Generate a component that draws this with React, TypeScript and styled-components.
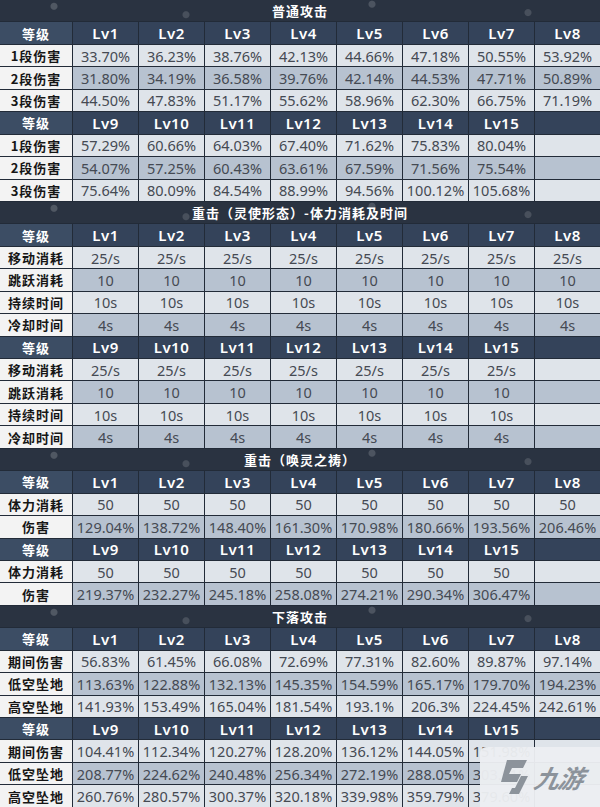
import * as React from "react";
import styled, { createGlobalStyle } from "styled-components";

const GlobalStyle = createGlobalStyle`
  html, body {
    margin: 0;
    padding: 0;
    background: #1f2734;
  }
  * {
    box-sizing: border-box;
  }
`;

const FONT = `"Noto Sans", "Noto Sans CJK SC", sans-serif`;

const Page = styled.div`
  position: relative;
  width: 600px;
  height: 807px;
  display: flex;
  flex-direction: column;
  gap: 1px;
  background: #222b38;
  overflow: hidden;
  font-family: ${FONT};
`;

const TitleRow = styled.div`
  flex: 1;
  display: flex;
  align-items: center;
  justify-content: center;
  background-color: #2a3341;
  background-image: radial-gradient(circle at 9% 30%, rgba(255, 255, 255, 0.18) 0 3px, transparent 4px),
    radial-gradient(circle at 31% 70%, rgba(255, 255, 255, 0.14) 0 3px, transparent 4px),
    radial-gradient(circle at 62% 20%, rgba(255, 255, 255, 0.16) 0 3px, transparent 4px),
    radial-gradient(circle at 88% 60%, rgba(255, 255, 255, 0.14) 0 3px, transparent 4px);
  color: #ffffff;
  font-family: "Noto Sans CJK SC", sans-serif;
  font-weight: 700;
  font-size: 13px;
  letter-spacing: 1px;
`;

const Row = styled.div`
  flex: 1;
  display: grid;
  grid-template-columns: 72px repeat(8, 1fr);
  gap: 1px;
`;

const HeadCell = styled.div<{ $label?: boolean }>`
  display: flex;
  align-items: center;
  justify-content: center;
  background: ${(p) => (p.$label ? "#3c4d64" : "#34435a")};
  color: #ffffff;
  font-family: ${(p) => (p.$label ? `"Noto Sans CJK SC", sans-serif` : FONT)};
  font-weight: ${(p) => (p.$label ? 700 : 600)};
  font-size: ${(p) => (p.$label ? "13px" : "15px")};
  letter-spacing: ${(p) => (p.$label ? "1px" : "0.5px")};
`;

const LabelCell = styled.div`
  display: flex;
  align-items: center;
  justify-content: center;
  background: #f3f3f3;
  color: #161616;
  font-family: "Noto Sans CJK SC", sans-serif;
  font-weight: 700;
  font-size: 13px;
  letter-spacing: 1px;
`;

const DataCell = styled.div<{ $dark?: boolean }>`
  display: flex;
  align-items: center;
  justify-content: center;
  background: ${(p) => (p.$dark ? "#b7c2d0" : "#dfe4ea")};
  color: #454a53;
  font-size: 14.5px;
  font-weight: 400;
  white-space: nowrap;
`;

const Logo = styled.div`
  position: absolute;
  right: 0;
  bottom: 0;
  width: 120px;
  height: 60px;
  display: flex;
  align-items: center;
  justify-content: center;
  gap: 4px;
  background: rgba(236, 238, 241, 0.96);
  border-top-left-radius: 6px;
`;

const LogoText = styled.span`
  font-family: "Noto Sans CJK SC", sans-serif;
  font-weight: 700;
  font-style: italic;
  font-size: 25px;
  color: #8c939b;
  transform: skewX(-12deg);
  letter-spacing: -1px;
`;

type Block = { levels: string[]; rows: { label: string; values: string[] }[] };
type Section = { title: string; blocks: Block[] };

const lv = (a: number, b: number) => Array.from({ length: b - a + 1 }, (_, i) => `Lv${a + i}`);
const rep = (v: string, n: number) => Array.from({ length: n }, () => v);

const sections: Section[] = [
  {
    title: "普通攻击",
    blocks: [
      {
        levels: lv(1, 8),
        rows: [
          { label: "1段伤害", values: ["33.70%", "36.23%", "38.76%", "42.13%", "44.66%", "47.18%", "50.55%", "53.92%"] },
          { label: "2段伤害", values: ["31.80%", "34.19%", "36.58%", "39.76%", "42.14%", "44.53%", "47.71%", "50.89%"] },
          { label: "3段伤害", values: ["44.50%", "47.83%", "51.17%", "55.62%", "58.96%", "62.30%", "66.75%", "71.19%"] },
        ],
      },
      {
        levels: lv(9, 15),
        rows: [
          { label: "1段伤害", values: ["57.29%", "60.66%", "64.03%", "67.40%", "71.62%", "75.83%", "80.04%"] },
          { label: "2段伤害", values: ["54.07%", "57.25%", "60.43%", "63.61%", "67.59%", "71.56%", "75.54%"] },
          { label: "3段伤害", values: ["75.64%", "80.09%", "84.54%", "88.99%", "94.56%", "100.12%", "105.68%"] },
        ],
      },
    ],
  },
  {
    title: "重击（灵使形态）-体力消耗及时间",
    blocks: [
      {
        levels: lv(1, 8),
        rows: [
          { label: "移动消耗", values: rep("25/s", 8) },
          { label: "跳跃消耗", values: rep("10", 8) },
          { label: "持续时间", values: rep("10s", 8) },
          { label: "冷却时间", values: rep("4s", 8) },
        ],
      },
      {
        levels: lv(9, 15),
        rows: [
          { label: "移动消耗", values: rep("25/s", 7) },
          { label: "跳跃消耗", values: rep("10", 7) },
          { label: "持续时间", values: rep("10s", 7) },
          { label: "冷却时间", values: rep("4s", 7) },
        ],
      },
    ],
  },
  {
    title: "重击（唤灵之祷）",
    blocks: [
      {
        levels: lv(1, 8),
        rows: [
          { label: "体力消耗", values: rep("50", 8) },
          { label: "伤害", values: ["129.04%", "138.72%", "148.40%", "161.30%", "170.98%", "180.66%", "193.56%", "206.46%"] },
        ],
      },
      {
        levels: lv(9, 15),
        rows: [
          { label: "体力消耗", values: rep("50", 7) },
          { label: "伤害", values: ["219.37%", "232.27%", "245.18%", "258.08%", "274.21%", "290.34%", "306.47%"] },
        ],
      },
    ],
  },
  {
    title: "下落攻击",
    blocks: [
      {
        levels: lv(1, 8),
        rows: [
          { label: "期间伤害", values: ["56.83%", "61.45%", "66.08%", "72.69%", "77.31%", "82.60%", "89.87%", "97.14%"] },
          { label: "低空坠地", values: ["113.63%", "122.88%", "132.13%", "145.35%", "154.59%", "165.17%", "179.70%", "194.23%"] },
          { label: "高空坠地", values: ["141.93%", "153.49%", "165.04%", "181.54%", "193.1%", "206.3%", "224.45%", "242.61%"] },
        ],
      },
      {
        levels: lv(9, 15),
        rows: [
          { label: "期间伤害", values: ["104.41%", "112.34%", "120.27%", "128.20%", "136.12%", "144.05%", "151.98%"] },
          { label: "低空坠地", values: ["208.77%", "224.62%", "240.48%", "256.34%", "272.19%", "288.05%", "303.91%"] },
          { label: "高空坠地", values: ["260.76%", "280.57%", "300.37%", "320.18%", "339.98%", "359.79%", "379.60%"] },
        ],
      },
    ],
  },
];

function pad(values: string[]) {
  return [...values, ...rep("", 8 - values.length)];
}

export default function App() {
  return (
    <>
      <GlobalStyle />
      <Page>
        {sections.map((s) => (
          <React.Fragment key={s.title}>
            <TitleRow>{s.title}</TitleRow>
            {s.blocks.map((b, bi) => (
              <React.Fragment key={bi}>
                <Row>
                  <HeadCell $label>等级</HeadCell>
                  {pad(b.levels).map((l, i) => (
                    <HeadCell key={i}>{l}</HeadCell>
                  ))}
                </Row>
                {b.rows.map((r, ri) => (
                  <Row key={r.label}>
                    <LabelCell>{r.label}</LabelCell>
                    {pad(r.values).map((v, i) => (
                      <DataCell key={i} $dark={ri % 2 === 1}>
                        {v}
                      </DataCell>
                    ))}
                  </Row>
                ))}
              </React.Fragment>
            ))}
          </React.Fragment>
        ))}
        <Logo>
          <svg width="34" height="38" viewBox="0 0 34 38">
            <path d="M10 2 L30 2 L26 10 L15 10 L12 16 L24 16 L20 24 L4 24 Z" fill="#8c939b" />
            <path d="M24 18 L31 18 L22 36 L12 36 L15 30 L18 30 Z" fill="#8c939b" />
          </svg>
          <LogoText>九游</LogoText>
        </Logo>
      </Page>
    </>
  );
}
